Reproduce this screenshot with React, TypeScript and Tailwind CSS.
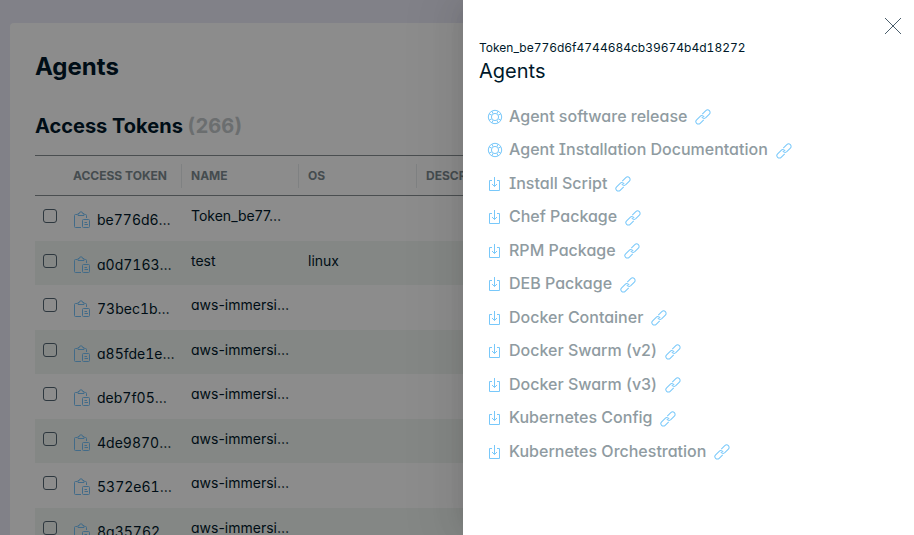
const tokens = [
  { token: "be776d6…", name: "Token_be77…", os: "" },
  { token: "a0d7163…", name: "test", os: "linux" },
  { token: "73bec1b…", name: "aws-immersi…", os: "" },
  { token: "a85fde1e…", name: "aws-immersi…", os: "" },
  { token: "deb7f05…", name: "aws-immersi…", os: "" },
  { token: "4de9870…", name: "aws-immersi…", os: "" },
  { token: "5372e61…", name: "aws-immersi…", os: "" },
  { token: "8a35762…", name: "aws-immersi…", os: "" },
];

const links = [
  { label: "Agent software release", kind: "help" },
  { label: "Agent Installation Documentation", kind: "help" },
  { label: "Install Script", kind: "download" },
  { label: "Chef Package", kind: "download" },
  { label: "RPM Package", kind: "download" },
  { label: "DEB Package", kind: "download" },
  { label: "Docker Container", kind: "download" },
  { label: "Docker Swarm (v2)", kind: "download" },
  { label: "Docker Swarm (v3)", kind: "download" },
  { label: "Kubernetes Config", kind: "download" },
  { label: "Kubernetes Orchestration", kind: "download" },
];

function CopyIcon() {
  return (
    <svg viewBox="0 0 18 18" className="size-[18px]" fill="none" stroke="currentColor" aria-hidden="true">
      <path d="M8 16.500H2.500a1 1 0 0 1-1-1V4.500a1 1 0 0 1 1-1h2M11.500 3.500h1a1 1 0 0 1 1 1V7" />
      <path d="M5 4.500v-2h1.300a1.600 1.600 0 0 1 3.400 0H11v2z" />
      <rect x="9.500" y="8.500" width="7" height="8" rx="1" />
      <path d="M11.500 11.500h2.500M11.500 13.500h3.500" />
    </svg>
  );
}

function HelpIcon() {
  return (
    <svg viewBox="0 0 16 16" className="size-4" fill="none" stroke="currentColor" aria-hidden="true">
      <circle cx="8" cy="8" r="6.700" />
      <circle cx="8" cy="8" r="3.600" />
      <path d="M4.900 2.100l1.200 2.600M2.100 4.900l2.600 1.200M11.100 2.100l-1.200 2.600M13.900 4.900l-2.600 1.200M4.900 13.900l1.200-2.600M2.100 11.100l2.600-1.200M11.100 13.900l-1.200-2.600M13.900 11.100l-2.600-1.200" />
    </svg>
  );
}

function DownloadIcon() {
  return (
    <svg viewBox="0 0 16 16" className="size-4" fill="none" stroke="currentColor" aria-hidden="true">
      <path d="M5 4.500H2.500v10h10v-10H10M7.500 1v9.500M5 8l2.500 2.500L10 8" />
    </svg>
  );
}

function LinkIcon() {
  return (
    <svg viewBox="0 0 16 16" className="size-4" fill="none" stroke="currentColor" aria-hidden="true">
      <g transform="rotate(-45 8 8)">
        <path d="M6.500 10.500H1.500a2.500 2.500 0 0 1 0-5h5a2.500 2.500 0 0 1 2.300 3.300" />
        <path d="M9.500 5.500H14.500a2.500 2.500 0 0 1 0 5H9.500a2.500 2.500 0 0 1-2.300-3.300" />
      </g>
    </svg>
  );
}

export default function App() {
  return (
    <div className="relative h-screen overflow-hidden bg-[#ebecf8] pt-[23px] pl-2.5 font-['Inter',sans-serif] text-[#00192a] [font-feature-settings:'cv11','cv08']">
      <main className="min-h-screen rounded-tl-[4px] bg-white px-[25px] pt-[26px]">
        <h1 className="text-2xl leading-9 font-bold">Agents</h1>
        <h2 className="mt-[23px] text-xl leading-9 font-bold">
          Access Tokens <span className="text-[#c3c8cb] tabular-nums">(266)</span>
        </h2>
        <table className="mt-[11px] w-full table-fixed border-separate border-spacing-0 text-left text-sm">
          <colgroup>
            <col className="w-[29px]" />
            <col className="w-[118px]" />
            <col className="w-[117px]" />
            <col className="w-[118px]" />
            <col />
          </colgroup>
          <thead>
            <tr className="h-[41px] text-xs text-[#7e8b91]">
              <th className="border-y border-[#888e92]" aria-label="Select" />
              {["Access Token", "Name", "OS", "Description"].map((h) => (
                <th key={h} className="border-y border-[#888e92] p-0 font-bold uppercase">
                  <div className="flex h-6 items-center border-r border-[#e7ebed] pl-[9px]">{h}</div>
                </th>
              ))}
            </tr>
          </thead>
          <tbody>
            {tokens.map((t) => (
              <tr key={t.token} className="align-top odd:h-[45px] even:h-[44px] even:bg-[#f0f6f3]">
                <td className="p-0 pt-[13px] pl-2">
                  <input
                    type="checkbox"
                    aria-label={"Select " + t.token}
                    className="block size-3.5 appearance-none rounded-[3px] border border-[#546673]"
                  />
                </td>
                <td className="p-0 pt-3.5 pl-[9px]">
                  <div className="flex items-center gap-1.5">
                    <button type="button" aria-label={"Copy " + t.token} className="text-[#78c4fa]">
                      <CopyIcon />
                    </button>
                    <span className="leading-5 tabular-nums">{t.token}</span>
                  </div>
                </td>
                <td className="p-0 pt-2.5 pl-[9px] leading-5">{t.name}</td>
                <td className="p-0 pt-2.5 pl-[9px] leading-5">{t.os}</td>
                <td />
              </tr>
            ))}
          </tbody>
        </table>
      </main>

      <div className="absolute inset-0 bg-black/45" />

      <aside
        role="dialog"
        aria-labelledby="drawer-title"
        className="absolute inset-y-0 right-0 w-[451px] bg-white px-4 pt-10 shadow-[-6px_0_16px_-8px_rgba(0,0,0,0.08),-9px_0_28px_0_rgba(0,0,0,0.05),-12px_0_48px_16px_rgba(0,0,0,0.03)]"
      >
        <button type="button" aria-label="Close" className="absolute top-[17px] right-3 text-[#4a5d6b]">
          <svg viewBox="0 0 18 18" className="size-[18px]" fill="none" stroke="currentColor" aria-hidden="true">
            <path d="M1 1l16 16M17 1L1 17" />
          </svg>
        </button>
        <p className="text-xs leading-4 tabular-nums">Token_be776d6f4744684cb39674b4d18272</p>
        <h2 id="drawer-title" className="text-xl leading-[30px]">
          Agents
        </h2>
        <ul className="mt-[13px] pl-2 text-[#8f9ba1]">
          {links.map((l) => (
            <li key={l.label} className="flex items-center odd:h-[33px] even:h-[34px]">
              <a href="#" className="flex items-center text-base leading-6 font-medium">
                <span className="mr-1.5 pt-0.5 text-[#78c8fa]">
                  {l.kind === "help" ? <HelpIcon /> : <DownloadIcon />}
                </span>
                {l.label}
                <span className="ml-2 pt-[3px] text-[#78c8fa]">
                  <LinkIcon />
                </span>
              </a>
            </li>
          ))}
        </ul>
      </aside>
    </div>
  );
}
